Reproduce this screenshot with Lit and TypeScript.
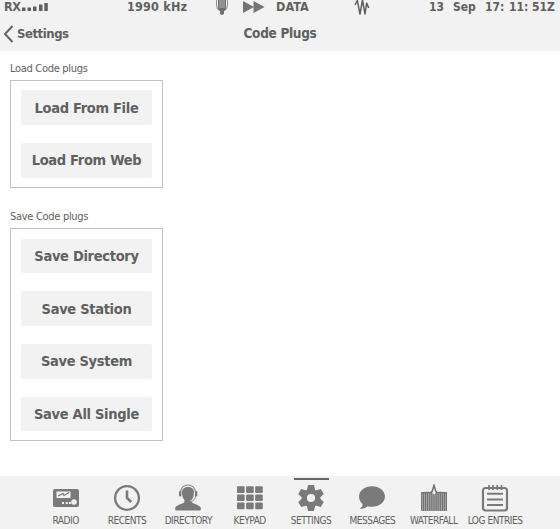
import { LitElement, html, svg, css } from "lit";
import { customElement, property } from "lit/decorators.js";

const bars = Array.from({ length: 14 }, (_, i) => i);

const icons: Record<string, unknown> = {
  RADIO: svg`<rect x="1" y="5" width="26" height="18" rx="2" fill="#7a7a7a"/>
    <rect x="4.5" y="7.5" width="14" height="6.5" fill="#f2f2f2"/>
    <path d="M6 12l5-2.5 1 2 5-3" fill="none" stroke="#777" stroke-width="1.2"/>
    <circle cx="22" cy="18" r="2.8" fill="#f2f2f2"/>
    <path d="M10 18h2v2h-2zM13.8 18h2v2h-2zM17 18h2v2h-2z" fill="#f2f2f2"/>`,
  RECENTS: svg`<circle cx="14" cy="14" r="11.9" fill="none" stroke="#7a7a7a" stroke-width="2.3"/>
    <path d="M14 6.500V14l4.200 4" fill="none" stroke="#7a7a7a" stroke-width="2.6"/>`,
  DIRECTORY: svg`<path d="M14 3c4.800 0 6.400 3 6 7-.3 3-1.400 5-2.400 6v2.300c1.600 1.800 8.300 2.300 9.200 5.700.3 1.500 0 2.500-1 2.500H2.200c-1 0-1.300-1-1-2.500.8-3.400 7.600-3.900 9.200-5.700V16c-1-1-2.100-3-2.400-6-.4-4 1.200-7 6-7z" fill="#7a7a7a"/>
    <path d="M6.500 8C8-1.300 20-1.300 21.500 8" fill="none" stroke="#858585" stroke-width="1.100"/>
    <path d="M20.300 8v4.500c-.5 2.500-2 3.800-4 4.300" fill="none" stroke="#f2f2f2" stroke-width=".9"/>
    <path d="M21.700 12c-.5 3-2 5-4.800 5.500" fill="none" stroke="#858585"/>
    <rect x="5" y="7" width="2.300" height="5.500" rx="1" fill="#7a7a7a"/><rect x="21" y="7" width="2.300" height="5.500" rx="1" fill="#7a7a7a"/>`,
  KEYPAD: [0, 1, 2].map((r) =>
    [0, 1, 2].map(
      (c) => svg`<rect x=${1 + c * 9.1} y=${2.2 + r * 8.2} width="7.6" height="6.7" rx="1" fill="#7a7a7a"/>`,
    ),
  ),
  SETTINGS: svg`<g fill="#7a7a7a">${[0, 60, 120, 180, 240, 300].map(
    (a) => svg`<path d="M9.800 6.500L11 1h6l1.200 5.500z" transform="rotate(${a} 14 14)"/>`,
  )}</g><circle cx="14" cy="14" r="6.700" fill="none" stroke="#7a7a7a" stroke-width="5.200"/>`,
  MESSAGES: svg`<path d="M14 2.200c7.300 0 13 4.600 13 10.300s-5.700 10.300-13 10.300c-1.500 0-3-.2-4.300-.6-2.200 1.800-5 2.800-8 2.800 2-1.500 2.900-3 2.900-5C2.300 18 1 15.400 1 12.500 1 6.800 6.700 2.200 14 2.200z" fill="#7a7a7a"/>`,
  WATERFALL: svg`<rect x="1.200" y="10" width="25.800" height="17" fill="#b2b2b2"/>
    <path d=${bars.map((i) => `M${1.7 + i * 1.9} 9V27`).join("")} stroke="#6e6e6e" stroke-width="1.1"/>
    <path d="M1 9.200l6-.7 4 .3 1.500-2L14 1.500l1.500 5.300 1.500 2 4-.3 6 .7" fill="none" stroke="#707070" stroke-width="1.700"/>
    <path d="M13 10l1-6 1.100 6z" fill="#f2f2f2"/>`,
  "LOG ENTRIES": svg`<g fill="none" stroke="#7a7a7a"><rect x="2" y="4" width="24" height="22.5" rx="2.5" stroke-width="2.2"/>
    <path d="M8 1v5M12 1v5M16.300 1v5M20.500 1v5" stroke-width="1.7"/>
    <path d="M6 9.800h16M6 15.500h16M6 21h16" stroke-width="1.9"/></g>`,
};

@customElement("status-header")
class StatusHeader extends LitElement {
  static styles = css`
    :host { display: block; height: 51px; background: #f2f2f2; overflow: hidden; color: #606060; font-weight: 700; }
    .status { display: grid; grid-template-columns: 123px 88px 28px 33px 78px 75px 1fr; padding-left: 4px; height: 14px; line-height: 13px; font-size: 12.5px; white-space: pre; }
    .cell { display: flex; }
    .rx { letter-spacing: -0.4px; }
    .freq { letter-spacing: 0.2px; }
    .data { letter-spacing: 0.05px; }
    .clock { display: grid; grid-template-columns: 24px 32px 24px 23px 1fr; font-size: 12px; line-height: 14px; }
    svg { display: block; flex: none; }
    .nav { display: grid; grid-template-columns: 1fr auto 1fr; align-items: center; height: 20px; margin-top: 10px; font-size: 13.5px; }
    .back { display: flex; align-items: center; gap: 3px; padding-left: 3px; font-size: 13px; letter-spacing: -0.45px; line-height: 18px; }
    .title { letter-spacing: -0.3px; line-height: 18px; margin-top: -2px; }
  `;
  render() {
    return html`
      <div class="status">
        <div class="cell"><span class="rx">RX</span>
          <svg width="28" height="14" viewBox="20 0 28 14"><path d="M21 7.500h3.500V11H21zM26.500 7.500h3.500V11h-3.500zM32 6.500h3.500V11H32zM38 4.500h3.500V11H38zM43.300 3h3.500v8h-3.500z" fill="#606060"/></svg>
        </div>
        <span class="freq">1990 kHz</span>
        <svg width="14" height="16" viewBox="0 0 14 16"><path d="M1.500 0v5q0 4 3 6M12.500 0v5q0 4-3 6" fill="none" stroke="#909090"/><path d="M3 0h8v9l-2 2v3l-2 1-2-1v-3L3 9z" fill="#707070"/><path d="M5 0v8M7 0v8M9 0v8" stroke="#b5b5b5"/></svg>
        <svg width="22" height="14" viewBox="0 0 22 14"><path d="M0 1l11 6-11 6zM10.500 1l11 6-11 6z" fill="#747474"/></svg>
        <span class="data">DATA</span>
        <svg width="16" height="15" viewBox="0 0 16 15"><path d="M1 5L3.300 .5l2.700 13.500L8.500 0l2.500 14L12.700 3l2 5" fill="none" stroke="#606060" stroke-width="1.500" stroke-linejoin="round"/></svg>
        <span class="clock"><span>13</span><span>Sep</span><span>17:</span><span>11:</span><span>51Z</span></span>
      </div>
      <div class="nav">
        <span class="back"><svg width="11" height="18" viewBox="0 0 11 18"><path d="M9.500 1L2 9l7.500 8" fill="none" stroke="#606060" stroke-width="1.9"/></svg>Settings</span>
        <span class="title">Code Plugs</span>
      </div>`;
  }
}

@customElement("plug-group")
class PlugGroup extends LitElement {
  @property() label = "";
  @property({ attribute: false }) actions: string[] = [];
  static styles = css`
    :host { display: block; color: #606060; }
    .label { height: 20px; line-height: 17px; font-size: 11px; letter-spacing: -0.3px; }
    .box { box-sizing: border-box; width: 153px; border: 1px solid #c2c2c2; padding: 9.2px 10px; display: flex; flex-direction: column; gap: 18px; background: #fff; }
    .action { display: block; border: 0; border-radius: 2px; padding: 0; height: 34.7px; background: #f2f2f2; color: #606060; font: inherit; font-size: 14.5px; font-weight: 700; white-space: nowrap; letter-spacing: -0.3px; }
  `;
  render() {
    return html`<div class="label">${this.label}</div>
      <div class="box">${this.actions.map((a) => html`<button class="action">${a}</button>`)}</div>`;
  }
}

@customElement("tab-bar")
class TabBar extends LitElement {
  static styles = css`
    :host { display: grid; grid-template-columns: repeat(8, 61.35px); box-sizing: border-box; padding-left: 35px; height: 53px; background: #f2f2f2; }
    .tab { display: flex; flex-direction: column; align-items: center; color: #606060; font-size: 10px; letter-spacing: -0.45px; white-space: nowrap; }
    .mark { width: 35px; height: 2px; margin-top: 2px; }
    .active .mark { background: #666; }
    svg { display: block; margin-top: 4px; }
    .name { height: 14px; line-height: 14px; margin-top: 2px; }
  `;
  render() {
    return Object.entries(icons).map(
      ([name, icon]) => html`<div class="tab ${name === "SETTINGS" ? "active" : ""}">
        <span class="mark"></span><svg width="28" height="28" viewBox="0 0 28 28">${icon}</svg><span class="name">${name}</span>
      </div>`,
    );
  }
}

@customElement("app-root")
class AppRoot extends LitElement {
  static styles = css`
    :host { display: flex; flex-direction: column; height: 529px; overflow: hidden; background: #fff; font-family: "DejaVu Sans Condensed", "DejaVu Sans", sans-serif; font-stretch: condensed; }
    .content { flex: 1; display: flex; flex-direction: column; gap: 20.4px; padding: 9.2px 10px 0; }
  `;
  render() {
    return html`<status-header></status-header>
      <main class="content">
        <plug-group label="Load Code plugs" .actions=${["Load From File", "Load From Web"]}></plug-group>
        <plug-group label="Save Code plugs" .actions=${["Save Directory", "Save Station", "Save System", "Save All Single"]}></plug-group>
      </main>
      <tab-bar></tab-bar>`;
  }
}
